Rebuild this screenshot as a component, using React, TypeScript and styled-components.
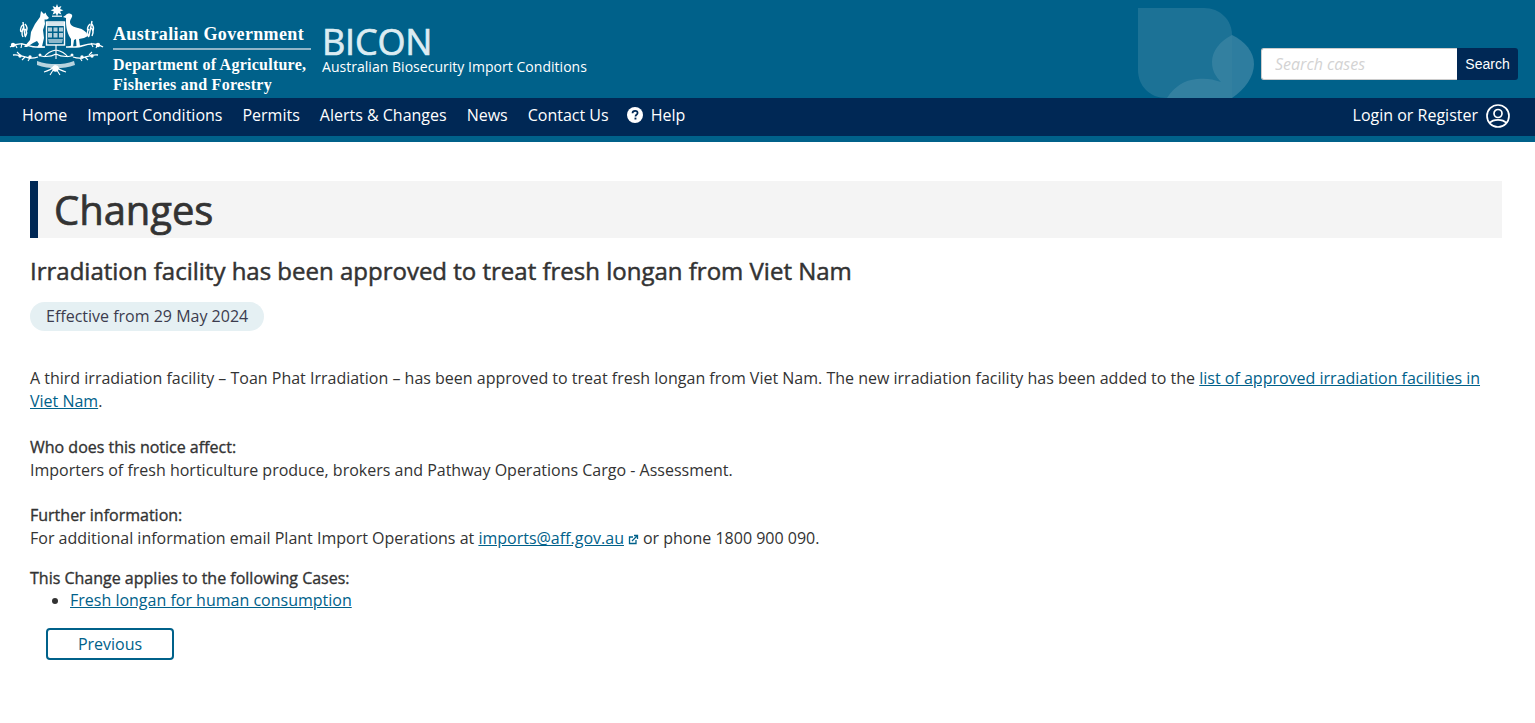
import React from "react";
import styled, { createGlobalStyle } from "styled-components";

const Global = createGlobalStyle`
  html, body { margin: 0; padding: 0; background: #fff; }
  body { font-family: "Open Sans", "Noto Sans", sans-serif; font-size: 16px; line-height: 23px; color: #333; }
  * { box-sizing: border-box; }
`;

const Page = styled.div`
  min-height: 723px;
  overflow: hidden;
`;

const Masthead = styled.header`
  height: 98px;
  background: #00618a;
  display: flex;
  position: relative;
  overflow: hidden;
`;

const Brand = styled.div`
  width: 322px;
  flex: none;
  display: flex;
`;

const Crest = styled.svg`
  width: 110px;
  height: 80px;
  flex: none;
`;

const GovText = styled.div`
  margin-left: 3px;
  width: 198px;
  padding-top: 23px;
  color: #fff;
  font-family: "Liberation Serif", serif;
  font-weight: 700;
`;

const GovName = styled.div`
  font-size: 18px;
  line-height: 22px;
  letter-spacing: 0.36px;
  white-space: nowrap;
  padding-bottom: 3px;
  border-bottom: 2px solid #8fb5c8;
`;

const Dept = styled.div`
  font-size: 16px;
  line-height: 20px;
  letter-spacing: 0.25px;
  margin-top: 5px;
  white-space: nowrap;
`;

const Title = styled.div`
  padding-top: 20px;
  color: #fff;
`;

const Bicon = styled.div`
  font-size: 36px;
  line-height: 44px;
  color: #dcecf2;
  letter-spacing: -0.2px;
  -webkit-text-stroke: 0.7px #dcecf2;
`;

const Sub = styled.div`
  font-size: 14px;
  line-height: 16px;
  letter-spacing: 0.03px;
  margin-top: -5px;
  white-space: nowrap;
`;

const Watermark = styled.svg`
  position: absolute;
  left: 1138px;
  top: 8px;
  width: 116px;
  height: 90px;
`;

const SearchBox = styled.form`
  margin: 48px 17px 0 auto;
  display: flex;
  height: 32px;
`;

const SearchInput = styled.input`
  width: 196px;
  height: 32px;
  border: 1px solid #ccc;
  border-right: 0;
  border-radius: 3px 0 0 3px;
  background: #fff;
  padding: 0 13px;
  font: italic 16px "Open Sans", sans-serif;
  &::placeholder { color: #d3d3d3; opacity: 1; }
`;

const SearchButton = styled.button`
  width: 61px;
  height: 32px;
  border: 0;
  border-radius: 0 3px 3px 0;
  background: #002855;
  color: #fff;
  font: 14px "Liberation Sans", Arial, sans-serif;
  padding: 0;
`;

const Nav = styled.nav`
  height: 44px;
  background: #002855;
  border-bottom: 6px solid #00618a;
  display: flex;
  align-items: center;
  padding: 0 25px 4px 22px;
  color: #fff;
`;

const NavLink = styled.a`
  color: #fff;
  font-size: 16px;
  line-height: 35px;
  margin-right: 20px;
  display: flex;
  align-items: center;
  white-space: nowrap;
`;

const HelpLink = styled(NavLink)`
  margin-left: -2px;
`;

const HelpIcon = styled.svg`
  width: 16px;
  height: 16px;
  margin-right: 8px;
`;

const Login = styled.a`
  margin-left: auto;
  display: flex;
  align-items: center;
  color: #fff;
  font-size: 16px;
  line-height: 35px;
`;

const UserIcon = styled.svg`
  width: 24px;
  height: 24px;
  margin: 2px 0 0 8px;
`;

const Main = styled.main`
  padding: 39px 33px 0 30px;
`;

const PageTitle = styled.h1`
  margin: 0;
  height: 57px;
  background: #f4f4f4;
  border-left: 8px solid #002855;
  padding-left: 16px;
  font-size: 40px;
  line-height: 57px;
  font-weight: 400;
  color: #333;
  letter-spacing: -0.05px;
  -webkit-text-stroke: 0.7px #333;
`;

const Heading = styled.h2`
  margin: 17px 0 0;
  font-size: 24px;
  line-height: 32px;
  font-weight: 400;
  color: #333;
  -webkit-text-stroke: 0.5px #333;
`;

const DatePill = styled.div`
  display: inline-block;
  margin-top: 15px;
  height: 29px;
  padding: 0 16px;
  border-radius: 15px;
  background: #e5f0f3;
  color: #3c3c4e;
  line-height: 29px;
`;

const Para = styled.p<{ $gap: number }>`
  margin: ${(p) => p.$gap}px 0 0;
`;

const Strong = styled.span`
  -webkit-text-stroke: 0.35px #333;
`;

const TextLink = styled.a`
  color: #00618a;
  text-decoration: underline;
`;

const ExternalIcon = styled.svg`
  width: 11px;
  height: 11px;
  margin: 0 4px 0 4px;
  vertical-align: -1px;
`;

const CaseList = styled.ul`
  margin: -1px 0 0;
  padding: 0 0 0 40px;
`;

const Previous = styled.button`
  display: block;
  margin: 16px 0 0 16px;
  width: 128px;
  height: 32px;
  background: #fff;
  border: 2px solid #00618a;
  border-radius: 4px;
  color: #00618a;
  font: 16px "Open Sans", sans-serif;
  padding: 0;
`;

function CrestArt() {
  return (
    <Crest viewBox="0 0 110 80" fill="#fff">
      {/* star */}
      <path d="M57 4l1.200 3.300 3.200-1.400-1.300 3.200 3.300 1.100-3.300 1.200 1.300 3.200-3.200-1.400-1.200 3.300-1.200-3.300-3.200 1.400 1.300-3.200-3.300-1.200 3.300-1.100-1.300-3.200 3.200 1.400z" />
      <rect x="52" y="15.500" width="10" height="1.500" opacity="0.8" />
      {/* kangaroo */}
      <path d="M41 11L44 14 45.500 12.500 46.500 15 49 18 47 19.500 44.500 19.500 45 24 43 30 44 38 42 46.500 45 47.500 37 47.500 39 44 37 41 33 43 27 47 24 47 30 40 31 32 35 24 40 17z" />
      {/* emu */}
      <path d="M66 15C67 13 71 13 72 15C73 17 70 19 70 22C70 25 73 27 78 28C83 29 87 32 88 36L84 38 79 39 80 46 82 47 75 47 76.500 46 76 39 74 40 73 47 68 47 71 45.500 71 39C68 35 66 28 66 22L66 18 63 17z" />
      {/* shield */}
      <rect x="46.500" y="22" width="18" height="23" fill="none" stroke="#fff" strokeWidth="1.400" />
      <rect x="47" y="22.500" width="17" height="3.500" opacity="0.85" />
      <path d="M48 27.500h4v4h-4zM53.500 27.500h4v4h-4zM59 27.500h4v4h-4zM48 33h4v4.500h-4zM53.500 33h4v4.500h-4zM59 33h4v4.500h-4z" opacity="0.7" />
      <path d="M48 39h15l-1 4h-13z" opacity="0.55" />
      <g fill="none" stroke="#fff" strokeWidth="1.100">
        {/* central stem and branches */}
        <path d="M56 45v14M56 50c-5 1-9 3-12 7M56 50c5 1 9 3 12 7M56 54c-5 3-10 3-15 2M56 54c5 3 10 3 15 2" />
        {/* upper wreath */}
        <path d="M23 22l2 14M24 24c-3 2-4 5-3 8M24 27c-2 3-3 6-1 10M25 24c2 2 3 4 1 8M25 29c2 2 2 5 0 8" strokeWidth="1.400" />
        <path d="M92 21l-3 15M91 23c2 2 3 5 2 8M90 27c3 2 4 5 2 9M90 24c-2 2-3 5-2 7M89 29c-2 2-2 5 0 8" strokeWidth="1.400" />
        {/* ground line */}
        <path d="M10 47c5-3 11-4 16-2 3 .5 6 2 10 2h9M66 47h10c5 0 10-3 15-3 5-.5 9 1 12 3" strokeWidth="1.400" />
        {/* lower foliage */}
        <path d="M13 55c6-1 11 2 16 3 3 .5 6 0 9-1M98 55c-6-1-11 2-16 3-3 .5-6 0-9-1" strokeWidth="1.300" />
        <path d="M17 52l3 3M22 60l3-3M28 61l2-3M92 52l-3 3M88 60l-3-3M82 61l-2-3" />
        <path d="M15 44l2 4M22 43l-1 5M91 43l2 4M98 44l-2 4" />
        {/* base spray */}
        <path d="M44 72c4-1 8-3 11-6 3 3 7 5 11 6M50 75l5-8 5 8" />
      </g>
      {/* scroll */}
      <path d="M37 61c6 2.500 13 3 19 3s12-.5 18-3l1 4c-6 2.500-13 3-19 3s-13-.5-19-3z" opacity="0.72" />
      {/* blossoms */}
      <circle cx="55.500" cy="68.500" r="3.200" />
      <circle cx="13" cy="45" r="2.200" />
      <circle cx="98" cy="45" r="2.200" />
      <circle cx="20" cy="56" r="1.700" />
      <circle cx="30" cy="57" r="1.700" />
      <circle cx="82" cy="57" r="1.700" />
      <circle cx="92" cy="56" r="1.700" />
      <circle cx="40" cy="55" r="1.500" />
      <circle cx="72" cy="55" r="1.500" />
    </Crest>
  );
}

export default function App() {
  return (
    <Page>
      <Global />
      <Masthead>
        <Brand>
          <CrestArt />
          <GovText>
            <GovName>Australian Government</GovName>
            <Dept>
              Department of Agriculture,
              <br />
              Fisheries and Forestry
            </Dept>
          </GovText>
        </Brand>
        <Title>
          <Bicon>BICON</Bicon>
          <Sub>Australian Biosecurity Import Conditions</Sub>
        </Title>
        <Watermark viewBox="0 0 116 90">
          <path d="M0 0h66c16 0 28 12 28 27v63H28C12 90 0 78 0 62z" fill="#fff" opacity="0.11" />
          <path d="M94 27c-12 6-20 16-20 27 0 9 4 15 9 20-8-3-15-4-24-3-13 1-23 8-30 19h65z" fill="#fff" opacity="0.1" />
          <path d="M94 27c13 6 22 17 22 29 0 13-9 25-22 34z" fill="#fff" opacity="0.18" />
        </Watermark>
        <SearchBox onSubmit={(e) => e.preventDefault()}>
          <SearchInput placeholder="Search cases" />
          <SearchButton>Search</SearchButton>
        </SearchBox>
      </Masthead>
      <Nav>
        <NavLink>Home</NavLink>
        <NavLink>Import Conditions</NavLink>
        <NavLink>Permits</NavLink>
        <NavLink>Alerts &amp; Changes</NavLink>
        <NavLink>News</NavLink>
        <NavLink>Contact Us</NavLink>
        <HelpLink>
          <HelpIcon viewBox="0 0 16 16">
            <circle cx="8" cy="8" r="8" fill="#fff" />
            <path d="M5.500 6.200c0-1.500 1.100-2.400 2.600-2.400s2.500.9 2.500 2.100c0 1.900-2.100 1.800-2.100 3.500" fill="none" stroke="#002855" strokeWidth="1.700" />
            <rect x="7.500" y="10.600" width="1.900" height="1.900" fill="#002855" />
          </HelpIcon>
          Help
        </HelpLink>
        <Login>
          Login or Register
          <UserIcon viewBox="0 0 24 24" fill="none" stroke="#fff" strokeWidth="1.700">
            <circle cx="12" cy="12" r="11" />
            <circle cx="12" cy="9.500" r="4" />
            <path d="M3.500 19c2-2.200 5-3.200 8.500-3.200s6.500 1 8.500 3.200" />
          </UserIcon>
        </Login>
      </Nav>
      <Main>
        <PageTitle>Changes</PageTitle>
        <Heading>Irradiation facility has been approved to treat fresh longan from Viet Nam</Heading>
        <DatePill>Effective from 29 May 2024</DatePill>
        <Para $gap={36}>
          A third irradiation facility – Toan Phat Irradiation – has been approved to treat fresh longan from Viet Nam. The new irradiation facility has been added to the{" "}
          <TextLink href="#">list of approved irradiation facilities in Viet Nam</TextLink>.
        </Para>
        <Para $gap={23}>
          <Strong>Who does this notice affect:</Strong>
          <br />
          Importers of fresh horticulture produce, brokers and Pathway Operations Cargo - Assessment.
        </Para>
        <Para $gap={22}>
          <Strong>Further information:</Strong>
          <br />
          For additional information email Plant Import Operations at <TextLink href="#">imports@aff.gov.au</TextLink>
          <ExternalIcon viewBox="0 0 11 11" fill="none" stroke="#00618a" strokeWidth="1.300">
            <path d="M5 3H1.500v6.500H8V6" />
            <path d="M4 7l5-5M6 1.500h3.500V5" />
          </ExternalIcon>
          or phone 1800 900 090.
        </Para>
        <Para $gap={17}>
          <Strong>This Change applies to the following Cases:</Strong>
        </Para>
        <CaseList>
          <li>
            <TextLink href="#">Fresh longan for human consumption</TextLink>
          </li>
        </CaseList>
        <Previous>Previous</Previous>
      </Main>
    </Page>
  );
}
